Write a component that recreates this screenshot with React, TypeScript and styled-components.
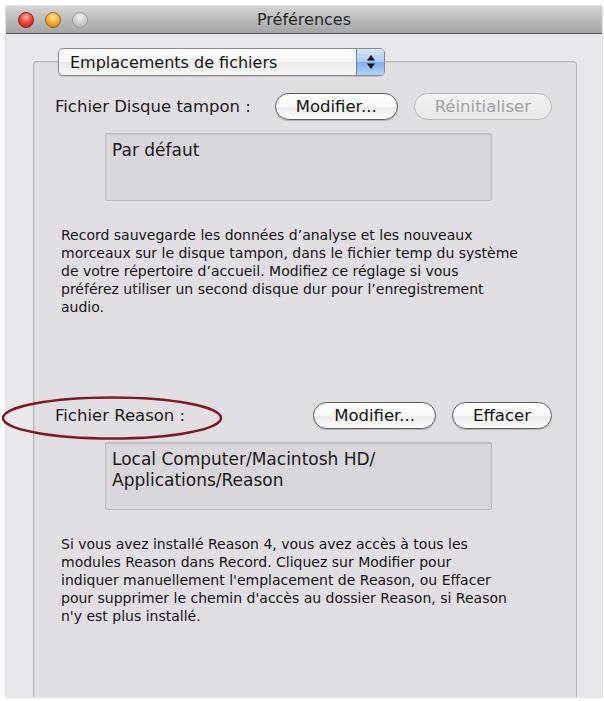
import React from 'react';
import styled, { createGlobalStyle } from 'styled-components';

const GlobalStyle = createGlobalStyle`
  html, body {
    margin: 0;
    padding: 0;
    background: #ffffff;
  }
  body {
    font-family: 'DejaVu Sans', 'Liberation Sans', sans-serif;
    color: #1a1a1a;
  }
`;

const Page = styled.div`
  position: relative;
  width: 604px;
  height: 701px;
  padding: 6px 0 0 6px;
  box-sizing: border-box;
`;

const Window = styled.div`
  width: 596px;
  height: 691px;
  display: flex;
  flex-direction: column;
  background: #e8e6ea;
  box-shadow: 0 0 2px rgba(0, 0, 0, 0.35);
`;

const TitleBar = styled.div`
  height: 27px;
  flex: none;
  position: relative;
  display: flex;
  align-items: center;
  padding-left: 12px;
  background: linear-gradient(#d4d4d4, #b6b6b6 60%, #a5a5a5);
  border-bottom: 1px solid #4e4e4e;
`;

const Lights = styled.div`
  display: flex;
  gap: 11px;
`;

const Light = styled.span<{ $color: 'red' | 'amber' | 'off' }>`
  width: 16px;
  height: 16px;
  border-radius: 50%;
  box-sizing: border-box;
  border: 1px solid
    ${(p) => (p.$color === 'red' ? '#8c1b17' : p.$color === 'amber' ? '#9a6311' : '#9c9c9c')};
  background: ${(p) =>
    p.$color === 'red'
      ? 'radial-gradient(circle at 50% 30%, #ffb2ad 0, #ee4a44 45%, #b3140f 100%)'
      : p.$color === 'amber'
      ? 'radial-gradient(circle at 50% 30%, #ffe9a6 0, #f6b337 45%, #c8730b 100%)'
      : 'radial-gradient(circle at 50% 30%, #f0f0f0 0, #cfcfcf 50%, #a9a9a9 100%)'};
`;

const Title = styled.div`
  position: absolute;
  left: 0;
  right: 0;
  top: 0;
  bottom: 0;
  display: flex;
  align-items: center;
  justify-content: center;
  font-size: 16px;
  color: #262626;
  pointer-events: none;
`;

const Content = styled.div`
  flex: 1;
  display: flex;
  flex-direction: column;
  padding: 14px 25px 0 27px;
  min-height: 0;
`;

const PopupWrap = styled.div`
  position: relative;
  z-index: 1;
  margin-left: 25px;
  width: 327px;
`;

const Popup = styled.div`
  height: 28px;
  box-sizing: border-box;
  display: flex;
  align-items: stretch;
  border: 1px solid #8a8a8a;
  border-radius: 5px;
  overflow: hidden;
  background: linear-gradient(#ffffff, #f6f6f6 50%, #e9e9e9 51%, #f7f7f7);
  box-shadow: 0 1px 1px rgba(0, 0, 0, 0.15);
`;

const PopupLabel = styled.div`
  flex: 1;
  display: flex;
  align-items: center;
  padding-left: 11px;
  font-size: 16px;
  color: #151515;
`;

const Stepper = styled.div`
  width: 27px;
  border-left: 1px solid #5f80b0;
  background: linear-gradient(#d6e6fb, #a9c9f1 50%, #7eaeea 51%, #b4d3f8);
  display: flex;
  align-items: center;
  justify-content: center;
`;

const Group = styled.div`
  flex: 1;
  margin-top: -15px;
  display: flex;
  flex-direction: column;
  background: #e1dee3;
  border: 1px solid #b7b4ba;
  border-bottom: none;
  border-radius: 4px 4px 0 0;
  box-shadow: inset 1px 1px 0 #d3d0d6;
  padding: 31px 24px 0 21px;
`;

const Row = styled.div<{ $top: number }>`
  margin-top: ${(p) => p.$top}px;
  height: 27px;
  display: flex;
  align-items: center;
`;

const Label = styled.div`
  flex: 1;
  font-size: 16.5px;
  color: #1c1c1c;
`;

const Buttons = styled.div`
  display: flex;
  gap: 16px;
`;

const Button = styled.button<{ $disabled?: boolean }>`
  height: 27px;
  padding: 0 20px;
  box-sizing: border-box;
  font-family: 'DejaVu Sans', 'Liberation Sans', sans-serif;
  font-size: 16.5px;
  color: ${(p) => (p.$disabled ? '#a3a1a5' : '#141414')};
  border-radius: 14px;
  border: 1px solid ${(p) => (p.$disabled ? '#b6b4b8' : '#5c5c5c')};
  background: ${(p) =>
    p.$disabled
      ? 'linear-gradient(#f2f1f3, #e7e6e9)'
      : 'linear-gradient(#ffffff, #f7f7f7 50%, #ebebeb 51%, #fbfbfb)'};
  box-shadow: ${(p) => (p.$disabled ? 'none' : '0 1px 1px rgba(0, 0, 0, 0.2)')};
  line-height: 25px;
`;

const Field = styled.div`
  margin: 13px 0 0 50px;
  width: 387px;
  height: 68px;
  box-sizing: border-box;
  padding: 6px 6px;
  background: #d9d6db;
  border: 1px solid #bcb9bf;
  border-radius: 2px;
  box-shadow: inset 0 1px 1px rgba(0, 0, 0, 0.08);
  font-size: 17px;
  line-height: 21px;
  color: #1a1a1a;
`;

const Note = styled.p`
  margin: 25px 0 0 6px;
  font-size: 14px;
  line-height: 18px;
  color: #151515;
`;

const Annotation = styled.svg`
  position: absolute;
  left: 0;
  top: 395px;
  overflow: visible;
`;

const Arrows: React.FC = () => (
  <svg width="10" height="16" viewBox="0 0 10 16">
    <path d="M5 1 L9 6.5 L1 6.5 Z" fill="#111" />
    <path d="M5 15 L9 9.5 L1 9.5 Z" fill="#111" />
  </svg>
);

export default function App() {
  return (
    <Page>
      <GlobalStyle />
      <Window>
        <TitleBar>
          <Lights>
            <Light $color="red" />
            <Light $color="amber" />
            <Light $color="off" />
          </Lights>
          <Title>Préférences</Title>
        </TitleBar>
        <Content>
          <PopupWrap>
            <Popup>
              <PopupLabel>Emplacements de fichiers</PopupLabel>
              <Stepper>
                <Arrows />
              </Stepper>
            </Popup>
          </PopupWrap>
          <Group>
            <Row $top={0}>
              <Label>Fichier Disque tampon :</Label>
              <Buttons>
                <Button>Modifier...</Button>
                <Button $disabled>Réinitialiser</Button>
              </Buttons>
            </Row>
            <Field>Par défaut</Field>
            <Note>
              Record sauvegarde les données d’analyse et les nouveaux
              <br />
              morceaux sur le disque tampon, dans le fichier temp du système
              <br />
              de votre répertoire d’accueil. Modifiez ce réglage si vous
              <br />
              préférez utiliser un second disque dur pour l’enregistrement
              <br />
              audio.
            </Note>
            <Row $top={86}>
              <Label>Fichier Reason :</Label>
              <Buttons>
                <Button>Modifier...</Button>
                <Button>Effacer</Button>
              </Buttons>
            </Row>
            <Field>
              Local Computer/Macintosh HD/
              <br />
              Applications/Reason
            </Field>
            <Note>
              Si vous avez installé Reason 4, vous avez accès à tous les
              <br />
              modules Reason dans Record. Cliquez sur Modifier pour
              <br />
              indiquer manuellement l'emplacement de Reason, ou Effacer
              <br />
              pour supprimer le chemin d'accès au dossier Reason, si Reason
              <br />
              n'y est plus installé.
            </Note>
          </Group>
        </Content>
      </Window>
      <Annotation width="226" height="46" viewBox="0 0 226 46">
        <ellipse cx="112" cy="23" rx="109" ry="20.5" fill="none" stroke="#7a1b22" strokeWidth="2.5" />
      </Annotation>
    </Page>
  );
}
